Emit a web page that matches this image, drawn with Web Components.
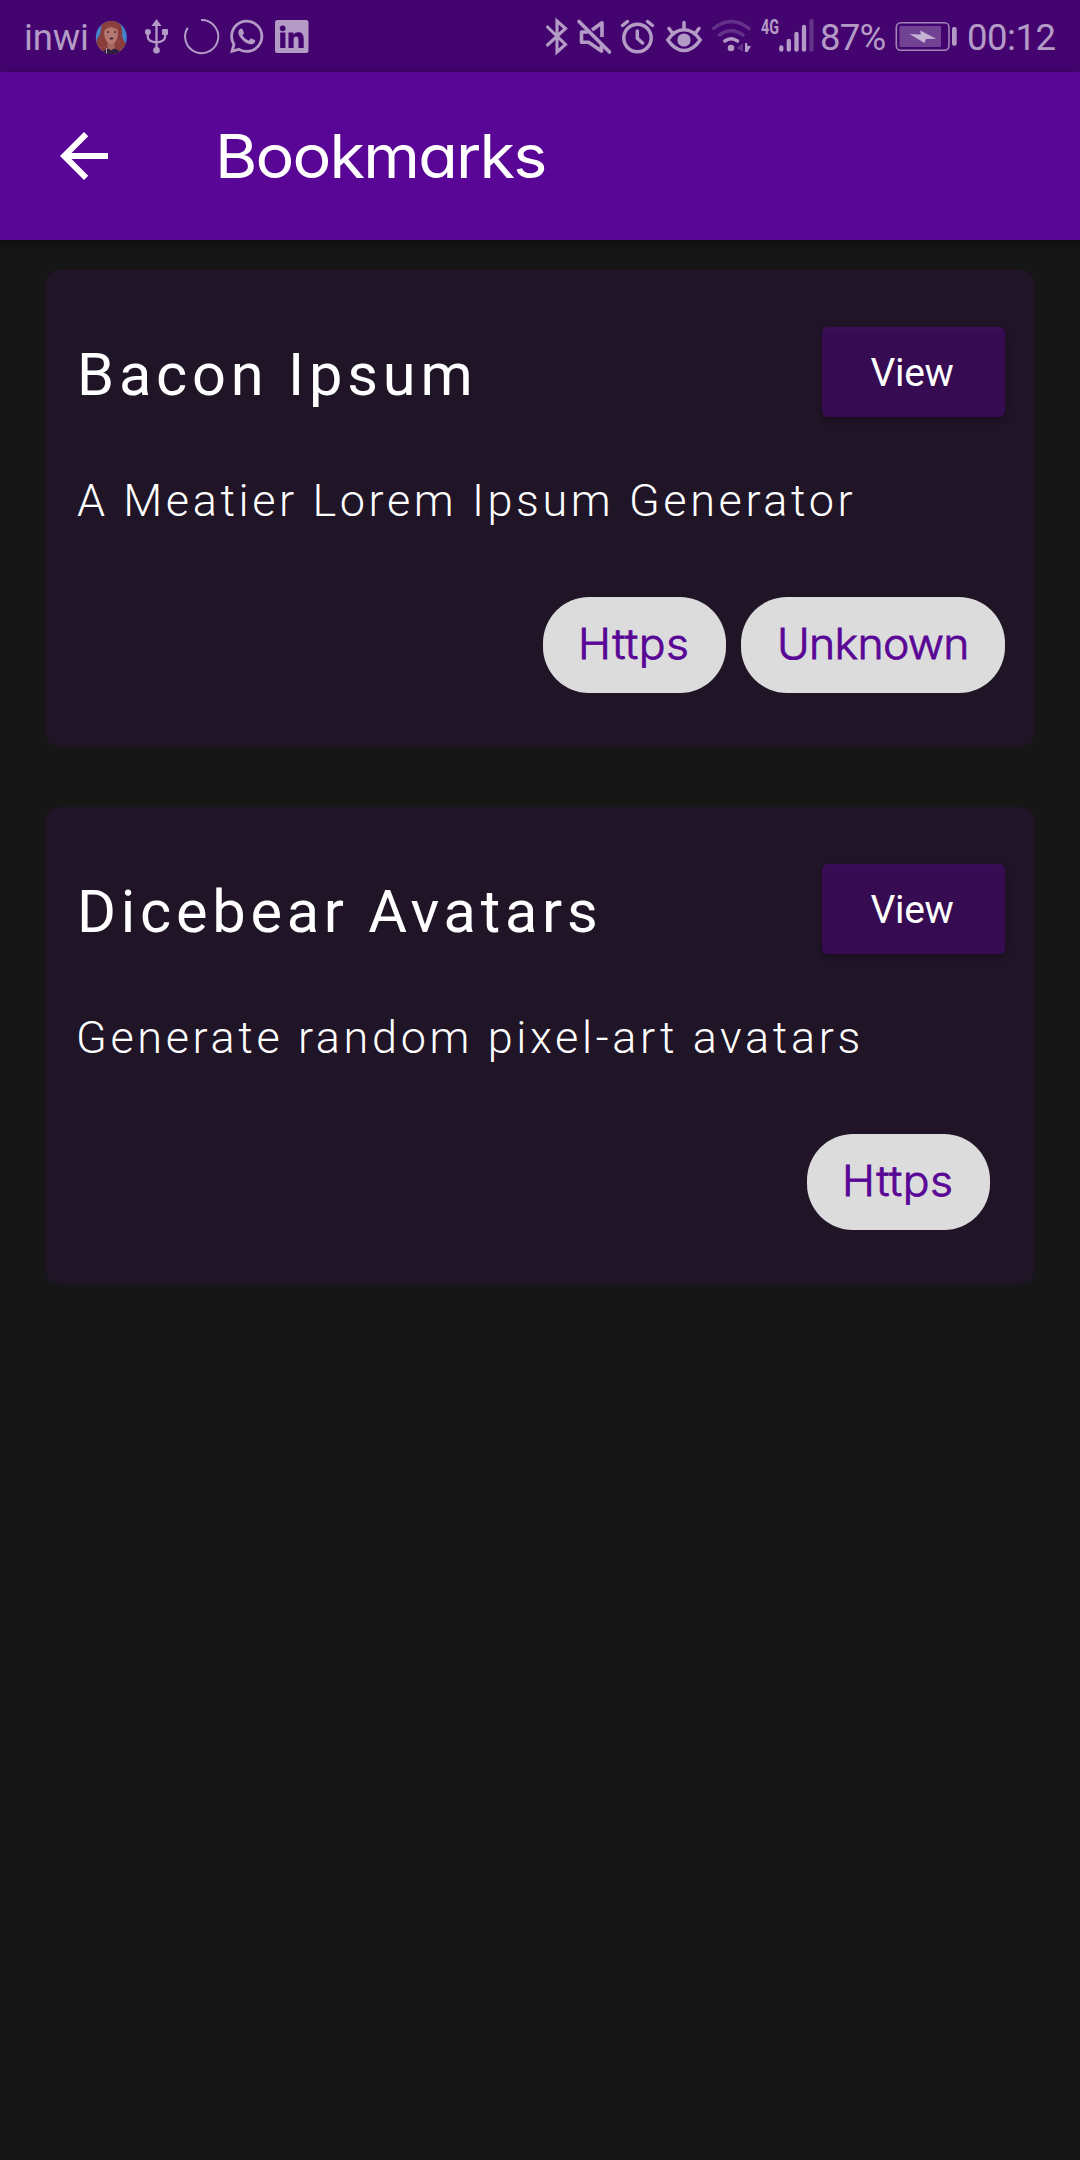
<!DOCTYPE html>
<html lang="en">
<head>
<meta charset="utf-8">
<title>Bookmarks</title>
<style>
  html, body { margin: 0; background: #161616; }
  body { font-family: Roboto, "Liberation Sans", sans-serif; color: #fff; }
</style>
</head>
<body>
<bookmarks-app></bookmarks-app>
<script>
const define = (name, html, ready) => {
  const template = document.createElement('template');
  template.innerHTML = html;
  customElements.define(name, class extends HTMLElement {
    constructor() {
      super();
      this.attachShadow({ mode: 'open' }).append(template.content.cloneNode(true));
    }
    connectedCallback() { if (ready) ready(this, this.shadowRoot); }
  });
};

/* A single line of text whose letter spacing is tuned to an ink width in px.
   "stretch" widens the glyphs themselves before the spacing is computed. */
define('tracked-text', `
<style>
  :host { display: block; white-space: nowrap; }
  span { display: inline-block; transform-origin: 0 50%; }
</style><span><slot></slot></span>`, (host, root) => {
  const text = host.textContent.trim();
  const ink = Number(host.getAttribute('ink'));
  const stretch = Number(host.getAttribute('stretch') || 1);
  const cs = getComputedStyle(host);
  const ctx = document.createElement('canvas').getContext('2d');
  ctx.font = `${cs.fontWeight} ${cs.fontSize} ${cs.fontFamily}`;
  const m = ctx.measureText(text);
  const range = document.createRange();
  range.selectNodeContents(host);
  const advance = range.getBoundingClientRect().width;
  const bearings = m.width - (m.actualBoundingBoxRight + m.actualBoundingBoxLeft);
  const spacing = (ink / stretch - (advance - bearings)) / (text.length - 1);
  const span = root.querySelector('span');
  host.style.letterSpacing = spacing + 'px';
  host.style.width = ink + 'px';
  span.style.marginLeft = m.actualBoundingBoxLeft * stretch + 'px';
  if (stretch !== 1) span.style.transform = `scaleX(${stretch})`;
});

const icons = {
  avatar: [94, 36, `
    <clipPath id="c"><ellipse cx="111.300" cy="37.500" rx="15.500" ry="16.500"/></clipPath>
    <g clip-path="url(#c)">
      <rect x="94" y="20" width="36" height="36" fill="#4583ca"/>
      <path d="M111 20c-7 0-10 4-10 9 0 4-2 7-4 10-2 5 0 12 5 15h18c5-1 7-6 6-10-1-3-4-5-4-9 1-8-2-15-11-15z" fill="#893d3c"/>
      <path d="M102.500 54c0-4 4-5 8-5.500s10 1.500 10.500 5.500z" fill="#291e3c"/>
      <path d="M107.500 40h7v8l-3.500 2.500-3.500-2.500z" fill="#a46762"/>
      <path d="M104 31c1-3 4-4 7.500-4s6.500 2 6.500 5c0 7-2.500 12-6.700 12S104 39 104 31z" fill="#b57770"/>
      <path d="M103 33c-1-7 3-9 8-9s10 2 8 9l-2-4-6-2-5 2z" fill="#8b403d"/>
      <path d="M107 32h2m5 0h2" stroke="#3a243c" stroke-width="1.600"/>
      <ellipse cx="111.500" cy="38.500" rx="1.900" ry="1" fill="#3b1c35"/>
      <path d="M106.500 48v6" stroke="#b49bc6" stroke-width="1"/>
      <path d="M101 42v.8m3 4v.8m-4-1v.8m7-22v.8m12 15v.8m2 7v.8m-6-2v.8m-6-23v.8" stroke="#b46962" stroke-width="1.200"/>
    </g>`],
  usb: [140, 34, `
    <path d="M156.500 25v25M147.800 32v5q0 4.500 8.700 5.500 8.700-1 8.700-6V32" fill="none" stroke="currentColor" stroke-width="2.300"/>
    <path d="M156.500 19l5 7h-10z" fill="currentColor"/><circle cx="156.500" cy="50.300" r="3.300" fill="currentColor"/>
    <circle cx="147.900" cy="32" r="3" fill="currentColor"/><rect x="162" y="29" width="6" height="6" rx="1" fill="currentColor"/>`],
  ring: [182, 39, `<path d="M201 20a16.600 16.600 0 1 1-13.300 7.700" fill="none" stroke="currentColor" stroke-width="2"/>`],
  whatsapp: [228, 38, `<path transform="translate(230 19.800) scale(1.390)" fill="currentColor" d="M17.472 14.382c-.297-.149-1.758-.867-2.030-.967-.273-.099-.471-.148-.670.150-.197.297-.767.966-.940 1.164-.173.199-.347.223-.644.075-.297-.150-1.255-.463-2.390-1.475-.883-.788-1.480-1.761-1.653-2.059-.173-.297-.018-.458.130-.606.134-.133.298-.347.446-.520.149-.174.198-.298.298-.497.099-.198.050-.371-.025-.520-.075-.149-.669-1.612-.916-2.207-.242-.579-.487-.500-.669-.510-.173-.008-.371-.010-.570-.010-.198 0-.520.074-.792.372-.272.297-1.040 1.016-1.040 2.479 0 1.462 1.065 2.875 1.213 3.074.149.198 2.096 3.200 5.077 4.487.709.306 1.262.489 1.694.625.712.227 1.360.195 1.871.118.571-.085 1.758-.719 2.006-1.413.248-.694.248-1.289.173-1.413-.074-.124-.272-.198-.570-.347m-5.421 7.403h-.004a9.870 9.870 0 0 1-5.031-1.378l-.361-.214-3.741.982.998-3.648-.235-.374a9.860 9.860 0 0 1-1.510-5.260c.001-5.450 4.436-9.884 9.888-9.884 2.640 0 5.122 1.030 6.988 2.898a9.825 9.825 0 0 1 2.893 6.994c-.003 5.450-4.437 9.884-9.885 9.884m8.413-18.297A11.815 11.815 0 0 0 12.050 0C5.495 0 .160 5.335.157 11.892c0 2.096.547 4.142 1.588 5.945L.057 24l6.305-1.654a11.882 11.882 0 0 0 5.683 1.448h.005c6.554 0 11.890-5.335 11.893-11.893a11.821 11.821 0 0 0-3.480-8.413z"/>`],
  linkedin: [274, 36, `<rect x="275" y="20" width="33.500" height="33" rx="2.500" fill="currentColor"/>
    <g fill="#430470"><circle cx="282.700" cy="28.300" r="2.900"/><rect x="280.200" y="32.500" width="5.200" height="15.500"/>
    <path d="M288.500 32.500h5v2.200c1-1.700 2.700-2.500 4.700-2.500 4.200 0 5.500 2.700 5.500 7V48h-5.200v-8c0-2-.500-3.400-2.300-3.400-2 0-2.600 1.400-2.600 3.400v8h-5.100z"/></g>`],
  bluetooth: [543, 27, `<path d="M547.500 27l18 17.500-8.500 7.500V21l8.500 7.500-18 16.500" fill="none" stroke="currentColor" stroke-width="3.100" stroke-linecap="round"/>`],
  mute: [575, 38, `<g fill="none" stroke="currentColor" stroke-width="3.600">
    <path d="M579 21.500L609.500 52" stroke-linecap="round"/><path d="M592 30l10-7.200V37M588 32h-6.500v10.300h7l13 8.700v-8" stroke-linejoin="round"/></g>`],
  alarm: [619, 37, `<g fill="none" stroke="currentColor" stroke-width="3.500" stroke-linecap="round">
    <circle cx="637.500" cy="38" r="13.700"/><path d="M637.300 31v7.300l5.200 4.700M622.500 25.500l5-4M647.500 21.500l5 4"/></g>`],
  eye: [664, 40, `<g fill="none" stroke="currentColor" stroke-width="3.500" stroke-linecap="round">
    <path d="M667.800 40q7-10.200 16.200-10.200T700.200 40Q693 50.500 684 50.500T667.800 40z"/>
    <path d="M684 22.500V29M669 28.500l3.500 4.500M699 28.500l-3.500 4.500"/></g><circle cx="684" cy="40" r="6.600" fill="currentColor"/>`],
  wifi: [709, 45, `<g fill="none" stroke="currentColor" stroke-width="3.500" stroke-linecap="round">
    <path d="M713.500 28.500q17.500-14 35.500 0M719.500 35q11.500-8.500 23.500 0" opacity=".3"/><path d="M724.800 41q6.200-4.500 12.700 0"/></g>
    <circle cx="731" cy="48" r="3.300" fill="currentColor"/>
    <path d="M743 43v9l-6-4z" fill="currentColor" opacity=".3"/><path d="M745 43l2 0 .5 3 3.500 0-3.500 6H745z" fill="currentColor"/>`],
  signal: [758, 60, `<text x="761" y="33.700" font-family="Roboto, sans-serif" font-weight="700" font-size="20" textLength="18" lengthAdjust="spacingAndGlyphs" fill="currentColor">4G</text>
    <g stroke="currentColor" stroke-width="4.300" stroke-linecap="round"><path d="M781.300 47.500v2.200M788.800 41v8.700M796.500 34v15.700M804 27v22.700"/><path d="M811.500 21v28.700" opacity=".3"/></g>`],
  battery: [894, 65, `<rect x="896.300" y="22.700" width="52.700" height="27.600" rx="4.500" fill="none" stroke="currentColor" stroke-width="1.600" opacity=".85"/>
    <rect x="899.500" y="26" width="41.500" height="21" rx="1" fill="currentColor" opacity=".42"/>
    <path d="M920.300 30.500l15.900 8.200-10.200.2-1.500 4.200-15-9 11.200.4z" fill="#c5b2d3"/>
    <rect x="952" y="27" width="4.700" height="18.700" rx="2" fill="currentColor"/>`],
  back: [48, 72, `<path transform="translate(48 0) scale(3)" d="M20 11H7.830l5.590-5.590L12 4l-8 8 8 8 1.410-1.410L7.830 13H20v-2z" fill="currentColor"/>`]
};

define('ui-icon', `<style>:host { display: block; flex: none; } svg { display: block; }</style>`, (host, root) => {
  const [x, w, art] = icons[host.getAttribute('name')];
  root.innerHTML += `<svg width="${w}" height="72" viewBox="${x} 0 ${w} 72">${art}</svg>`;
});

define('status-bar', `
<style>
  :host { display: flex; height: 72px; box-sizing: border-box; padding: 0 25px 0 26px; background: #430470;
    color: #b49bc6; font-size: 36.500px; line-height: 72px; justify-content: space-between; }
  div { display: flex; height: 72px; }
  .left { gap: 8px; } .right { gap: 5px; }
  tracked-text { padding-top: 1.500px; }
  .box { display: block; flex: none; }
  .carrier { width: 60px; } .pct { width: 70px; margin-left: -1px; } .time { width: 86px; margin-left: 5px; }
</style>
<div class="left">
  <span class="box carrier"><tracked-text ink="61">inwi</tracked-text></span>
  <ui-icon name="avatar"></ui-icon><ui-icon name="usb" style="margin-left:2px"></ui-icon>
  <ui-icon name="ring"></ui-icon><ui-icon name="whatsapp" style="margin-left:-1px"></ui-icon><ui-icon name="linkedin"></ui-icon>
</div>
<div class="right">
  <ui-icon name="bluetooth"></ui-icon><ui-icon name="mute"></ui-icon><ui-icon name="alarm" style="margin-left:1px"></ui-icon>
  <ui-icon name="eye" style="margin-left:3px"></ui-icon><ui-icon name="wifi"></ui-icon><ui-icon name="signal" style="margin-left:-1px"></ui-icon>
  <span class="box pct"><tracked-text ink="63.500">87%</tracked-text></span>
  <ui-icon name="battery" style="margin-left:-3px"></ui-icon>
  <span class="box time"><tracked-text ink="86.500">00:12</tracked-text></span>
</div>`);

define('app-bar', `
<style>
  :host { display: flex; height: 168px; align-items: center; padding-left: 48px; gap: 100px; background: #590696;
    position: relative; box-shadow: 0 4px 12px rgba(0,0,0,.4);
    font: 400 60.500px/80px Inter, sans-serif; font-feature-settings: "cv11"; }
</style>
<ui-icon name="back"></ui-icon><div><slot></slot></div>`);

define('view-button', `
<style>
  :host { display: flex; flex: none; width: 183px; height: 90px; align-items: center; justify-content: center;
    border-radius: 6px; background: linear-gradient(#3b0d58, #360b51 12px); box-shadow: 0 3px 6px rgba(0,0,0,.28);
    font-size: 39px; line-height: 60px; }
  tracked-text { margin: 1px 3px 0 0; }
</style><tracked-text ink="83">View</tracked-text>`);

define('tag-chip', `
<style>
  :host { display: flex; flex: none; box-sizing: border-box; height: 96px; align-items: center; justify-content: center;
    padding: 0 0 2px; width: var(--chip-width); border-radius: 46px; background: #dcdcdc; color: #590696;
    font: 300 42px/60px Inter, sans-serif; -webkit-text-stroke: .8px; }
</style><slot></slot>`);

define('bookmark-card', `
<style>
  :host { display: flex; flex-direction: column; box-sizing: border-box; height: 477px; padding: 57px 30px 54px;
    border-radius: 15px; background: #201427; }
  header { display: flex; justify-content: space-between; height: 90px; }
  .title { font-size: 59.500px; line-height: 90px; padding: 3px 0 0 6px; }
  .desc { font-size: 45px; font-weight: 300; line-height: 60px; padding-left: 2px; margin-top: 54px; color: #fff; }
  .tags { display: flex; justify-content: flex-end; gap: 15px; margin-top: auto; }
</style>
<header><div class="title"><slot name="title"></slot></div><view-button></view-button></header>
<div class="desc"><slot name="description"></slot></div>
<div class="tags"><slot name="tags"></slot></div>`);

define('bookmarks-app', `
<style>
  :host { display: block; height: 2160px; overflow: hidden; background: #161616; }
  main { display: flex; flex-direction: column; gap: 60px; padding: 30px 45px; }
  .https { --chip-width: 183px; }
  .unknown { --chip-width: 264px; }
  .last { margin-right: 15px; }
</style>
<status-bar></status-bar>
<app-bar><tracked-text ink="324" stretch="1.070">Bookmarks</tracked-text></app-bar>
<main>
  <bookmark-card>
    <tracked-text slot="title" ink="388.500">Bacon Ipsum</tracked-text>
    <tracked-text slot="description" ink="775.500">A Meatier Lorem Ipsum Generator</tracked-text>
    <tag-chip slot="tags" class="https"><tracked-text ink="105" stretch="1.060">Https</tracked-text></tag-chip>
    <tag-chip slot="tags" class="unknown"><tracked-text ink="186.500" stretch="1.060">Unknown</tracked-text></tag-chip>
  </bookmark-card>
  <bookmark-card>
    <tracked-text slot="title" ink="514">Dicebear Avatars</tracked-text>
    <tracked-text slot="description" ink="779.500" style="padding-left:2px">Generate random pixel-art avatars</tracked-text>
    <tag-chip slot="tags" class="https last"><tracked-text ink="105" stretch="1.060">Https</tracked-text></tag-chip>
  </bookmark-card>
</main>`);
</script>
</body>
</html>
